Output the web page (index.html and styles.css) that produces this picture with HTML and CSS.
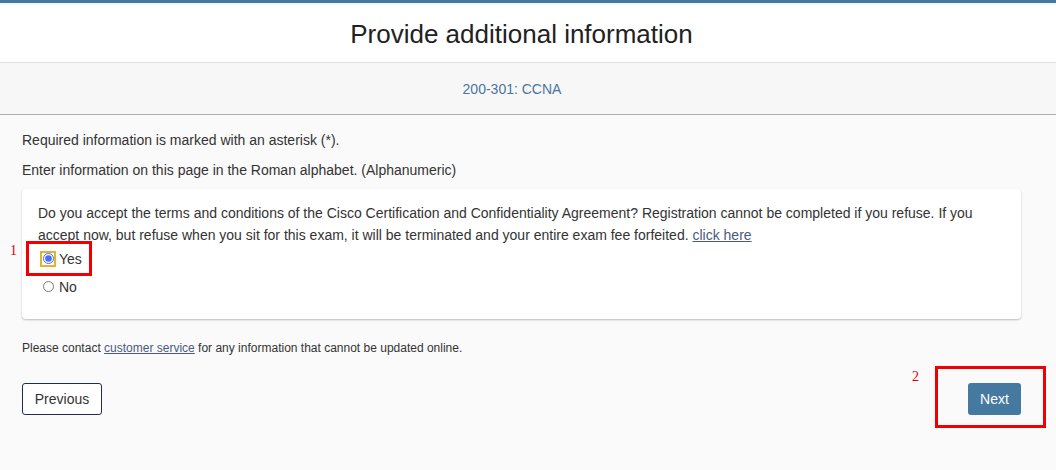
FILE: index.html
```html
<!DOCTYPE html>
<html lang="en">
<head>
<meta charset="utf-8">
<title>Provide additional information</title>
<link rel="stylesheet" href="styles.css">
</head>
<body>
<div class="topbar"></div>
<header class="page-header">
  <h1 class="title">Provide additional information</h1>
</header>
<div class="subheader">200-301: CCNA</div>
<main class="content">
  <p class="note">Required information is marked with an asterisk (*).</p>
  <p class="note note-last">Enter information on this page in the Roman alphabet. (Alphanumeric)</p>
  <section class="card">
    <p class="question">Do you accept the terms and conditions of the Cisco Certification and Confidentiality Agreement? Registration cannot be completed if you refuse. If you accept now, but refuse when you sit for this exam, it will be terminated and your entire exam fee forfeited. <a href="#" class="link">click here</a></p>
    <div class="options">
      <label class="option option-yes">
        <span class="marker">1</span>
        <span class="highlight"></span>
        <span class="radio-wrap"><input type="radio" name="accept" checked></span>
        <span class="opt-label">Yes</span>
      </label>
      <label class="option">
        <span class="radio-plain"><input type="radio" name="accept"></span>
        <span class="opt-label">No</span>
      </label>
    </div>
  </section>
  <p class="contact">Please contact <a href="#" class="link">customer service</a> for any information that cannot be updated online.</p>
  <div class="actions">
    <button class="btn btn-prev" type="button">Previous</button>
    <div class="next-wrap">
      <span class="marker marker-2">2</span>
      <span class="highlight highlight-next"></span>
      <button class="btn btn-next" type="button">Next</button>
    </div>
  </div>
</main>
</body>
</html>
```
FILE: styles.css
```css
* { box-sizing: border-box; }
html, body { margin: 0; padding: 0; }
body {
  background: #fafafa;
  font-family: "Liberation Sans", Arial, sans-serif;
  color: #333;
  width: 1056px;
  height: 470px;
  overflow: hidden;
}
.topbar {
  height: 3px;
  background: #44799f;
}
.page-header {
  background: #fff;
  height: 60px;
  border-top: 2px solid #f2f7fa;
  border-bottom: 1px solid #e0e0e0;
  display: flex;
  align-items: center;
  justify-content: center;
  padding: 0 35px 0 22px;
}
.title {
  margin: 0;
  font-weight: normal;
  font-size: 26px;
  color: #222;
  position: relative;
  top: 1px;
}
.subheader {
  height: 52px;
  background: #f7f7f7;
  border-bottom: 1px solid #b0b0b0;
  display: flex;
  align-items: center;
  justify-content: center;
  padding: 0 54px 0 22px;
  font-size: 14px;
  color: #4a75a0;
}
.content {
  padding: 17px 35px 0 22px;
}
.note {
  margin: 0 0 14px;
  font-size: 14px;
  line-height: 16px;
  color: #333;
}
.note-last {
  margin-bottom: 11px;
}
.card {
  background: #fff;
  border-radius: 4px;
  box-shadow: 0 1px 2px rgba(0,0,0,0.25);
  padding: 13px 16px 20px;
  height: 130px;
}
.question {
  margin: 0;
  font-size: 14px;
  line-height: 22px;
  color: #333;
}
.link {
  color: #4a5a80;
  text-decoration: underline;
}
.options {
  margin-top: 1px;
  display: flex;
  flex-direction: column;
  gap: 5px;
}
.option {
  position: relative;
  display: flex;
  align-items: center;
  font-size: 14px;
  height: 23px;
  color: #333;
}
.marker {
  position: absolute;
  left: -28px;
  top: -4px;
  color: #e00000;
  font-family: "Liberation Serif", "Times New Roman", serif;
  font-size: 14px;
}
.highlight {
  position: absolute;
  left: -12px;
  top: -6px;
  width: 66px;
  height: 35px;
  border: 3px solid #f00000;
}
.radio-wrap {
  display: inline-flex;
  align-items: center;
  justify-content: center;
  width: 16px;
  height: 16px;
  border: 2px solid #e5b22a;
  margin: 0 3px 0 2px;
}
.radio-wrap input, .radio-plain input {
  margin: 0;
  width: 11px;
  height: 11px;
  accent-color: #4a6cf7;
}
.radio-plain {
  display: inline-flex;
  align-items: center;
  justify-content: center;
  width: 16px;
  height: 16px;
  margin: 0 3px 0 2px;
}
.opt-label { line-height: 16px; }
.contact {
  margin: 22px 0 0;
  font-size: 12px;
  color: #333;
}
.actions {
  margin-top: 28px;
  display: flex;
  justify-content: space-between;
  align-items: center;
}
.btn {
  font-family: "Liberation Sans", Arial, sans-serif;
  font-size: 14px;
  height: 32px;
  border-radius: 3px;
  padding: 0 11px;
  cursor: pointer;
}
.btn-prev {
  background: #fff;
  border: 1px solid #1f2d4f;
  color: #333;
  width: 80px;
}
.next-wrap {
  position: relative;
}
.btn-next {
  background: #46799f;
  border: 0;
  color: #fff;
  width: 53px;
  padding: 0;
}
.marker-2 {
  left: -56px;
  top: -14px;
}
.highlight-next {
  left: -33px;
  top: -17px;
  width: 111px;
  height: 62px;
}
```
